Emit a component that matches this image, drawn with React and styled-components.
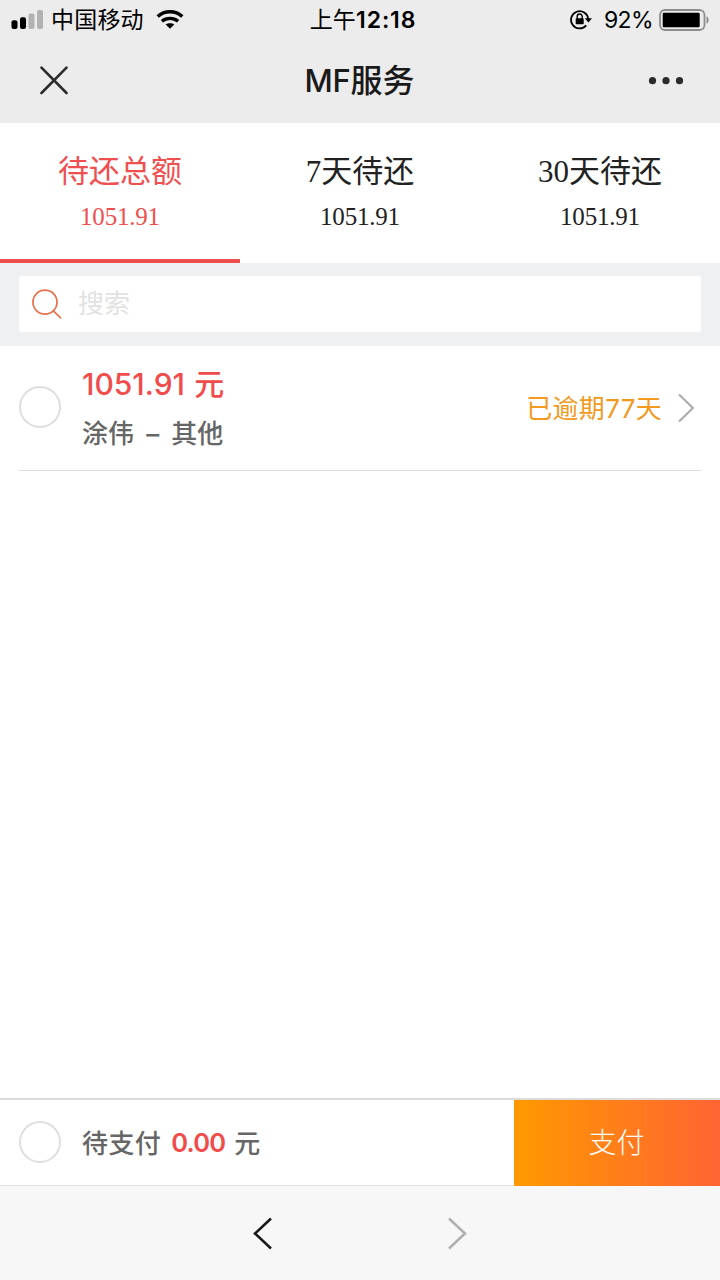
import React from "react";
import styled, { createGlobalStyle } from "styled-components";

const GlobalStyle = createGlobalStyle`
  * { box-sizing: border-box; }
  body {
    margin: 0;
    background: #fff;
    font-family: Inter, "Noto Sans CJK SC", sans-serif;
    color: #1a1a1a;
  }
`;

const Screen = styled.div`
  width: 720px;
  height: 1280px;
  display: flex;
  flex-direction: column;
  background: #fff;
  overflow: hidden;
`;

const Header = styled.header`
  height: 123px;
  background: #ececec;
  flex: none;
`;

const StatusBar = styled.div`
  height: 40px;
  display: grid;
  grid-template-columns: 1fr auto 1fr;
  align-items: center;
  padding: 0 10px 0 11px;
  color: #000;
  line-height: 40px;
`;

const StatusGroup = styled.div`
  display: flex;
  align-items: center;
  justify-content: ${(p) => (p.$end ? "flex-end" : "flex-start")};
  svg { display: block; flex: none; }
`;

const Carrier = styled.span`
  font-size: 23px;
  letter-spacing: 0.2px;
  margin: 0 12px 0 7px;
`;

const Clock = styled.span`
  font-size: 23px;
  font-weight: 600;
  letter-spacing: 0.9px;
  padding-left: 5px;
`;

const Meridiem = styled.span`
  font-weight: 400;
  letter-spacing: 0.2px;
`;

const BatteryLevel = styled.span`
  font-size: 23px;
  letter-spacing: -0.6px;
  margin: 0 6px 0 12px;
`;

const TitleBar = styled.div`
  height: 83px;
  display: grid;
  grid-template-columns: 1fr auto 1fr;
  align-items: center;
  padding: 0 36px 2px 39px;
  svg { display: block; }
`;

const Title = styled.h1`
  margin: 0;
  padding: 1px 4px 0 0;
  font-size: 32px;
  font-weight: 500;
  line-height: 40px;
`;

const TitleLatin = styled.span`
  font-size: 31px;
  letter-spacing: -0.2px;
`;

const MoreButton = styled.div`
  justify-self: end;
`;

const Tabs = styled.nav`
  display: grid;
  grid-template-columns: repeat(3, 1fr);
  height: 140px;
  flex: none;
  font-family: "Liberation Serif", "Noto Sans CJK SC", serif;
`;

const Tab = styled.div`
  display: flex;
  flex-direction: column;
  align-items: center;
  padding-top: 28px;
  color: ${(p) => (p.$active ? "#f04f50" : "#222")};
  border-bottom: 4px solid ${(p) => (p.$active ? "#ef4f4f" : "transparent")};
`;

const TabLabel = styled.span`
  font-size: 31px;
  line-height: 42px;
`;

const TabAmount = styled.span`
  font-size: 25px;
  line-height: 30px;
  letter-spacing: -0.2px;
  margin-top: 9px;
`;

const SearchArea = styled.div`
  height: 83px;
  flex: none;
  background: #eff0f2;
  padding: 13px 19px 14px;
`;

const SearchBox = styled.div`
  height: 56px;
  display: flex;
  align-items: center;
  gap: 15px;
  padding: 0 12px;
  border-radius: 3px;
  background: #fff;
  color: #e2e2e2;
  font-size: 26px;
  line-height: 54px;
  svg { display: block; }
`;

const List = styled.main`
  flex: 1;
  padding: 0 19px;
`;

const Row = styled.div`
  height: 125px;
  display: flex;
  align-items: center;
  padding: 0 6px 2px 0;
  border-bottom: 1px solid #dcdcdc;
  svg { margin-top: 2px; }
`;

const Radio = styled.span`
  width: 42px;
  height: 42px;
  flex: none;
  border: 2px solid #dedede;
  border-radius: 50%;
  margin-right: 21px;
`;

const RowText = styled.div`
  flex: 1;
  display: flex;
  flex-direction: column;
  padding-top: 2px;
`;

const Amount = styled.div`
  color: #f04c4c;
  font-size: 30px;
  font-weight: 500;
  line-height: 40px;
  word-spacing: 1.2px;
`;

const Payee = styled.div`
  color: #666;
  font-size: 26px;
  font-weight: 500;
  line-height: 36px;
  margin-top: 12px;
  word-spacing: 5.2px;
`;

const Overdue = styled.div`
  color: #f29a1f;
  font-size: 26px;
  line-height: 36px;
  letter-spacing: 0.3px;
  margin: 4px 15px 0 0;
`;

const PayBar = styled.footer`
  height: 88px;
  flex: none;
  display: flex;
  border-top: 2px solid #dcdcdc;
`;

const PaySummary = styled.div`
  flex: 1;
  display: flex;
  align-items: center;
  padding: 0 0 2px 19px;
  border-bottom: 1px solid #dedede;
  color: #666;
  font-size: 26px;
  font-weight: 500;
`;

const PayCaption = styled.span`
  letter-spacing: 0.4px;
`;

const PayTotal = styled.span`
  color: #f04c4c;
  font-size: 25.5px;
  font-weight: 600;
  letter-spacing: -0.8px;
  padding-top: 2px;
  margin: 0 9px 0 10px;
`;

const PayButton = styled.div`
  width: 206px;
  display: flex;
  align-items: center;
  justify-content: center;
  color: #fff;
  font-size: 28px;
  font-weight: 300;
  padding: 0 1px 4px 0;
  background: linear-gradient(to right, #ff9900, #ff6433);
`;

const BrowserBar = styled.div`
  height: 94px;
  flex: none;
  display: flex;
  align-items: center;
  justify-content: center;
  gap: 174px;
  background: #f7f7f7;
  svg { display: block; }
`;

const SignalIcon = () => (
  <svg width="33" height="20" viewBox="0 0 33 20">
    <rect x="0.5" y="10.2" width="6" height="8.8" rx="2" fill="#000" />
    <rect x="9" y="7.2" width="6" height="11.8" rx="2" fill="#000" />
    <rect x="17.5" y="3.4" width="6" height="15.6" rx="2" fill="#b2b2b2" />
    <rect x="26" y="0" width="6" height="19" rx="2" fill="#b2b2b2" />
  </svg>
);

const WifiIcon = () => (
  <svg width="28" height="20" viewBox="0 0 28 20" fill="none" stroke="#000">
    <path d="M1.7 6.6C8.4.2 19.6.2 26.3 6.6" strokeWidth="3.4" />
    <path d="M5.9 11.2C10.5 7.3 17.5 7.3 22.1 11.2" strokeWidth="3.3" />
    <path d="M14 18.8 9.7 14.6C12 12.7 16 12.7 18.3 14.6Z" fill="#000" stroke="none" />
  </svg>
);

const RotationLockIcon = () => (
  <svg width="22" height="20" viewBox="0 0 22 20" fill="none" stroke="#000">
    <path d="M16.2 15.4A8.6 8.6 0 1 1 18.2 9" strokeWidth="1.8" />
    <path d="M14.8 8.2H22L18.4 12.4Z" fill="#000" stroke="none" />
    <rect x="5.7" y="8.2" width="8" height="6" rx="0.8" fill="#000" stroke="none" />
    <path d="M7.2 9V6.5a2.5 2.5 0 0 1 5 0V9" strokeWidth="1.4" />
  </svg>
);

const BatteryIcon = () => (
  <svg width="51" height="22" viewBox="0 0 51 22">
    <rect x="1" y="1" width="44.5" height="20" rx="5" fill="none" stroke="#8e8e8e" strokeWidth="1.8" />
    <rect x="3.7" y="3.7" width="37" height="14.6" rx="1.2" fill="#000" />
    <path d="M47.5 7.2C50.3 8.2 50.3 13.8 47.5 14.8Z" fill="#8e8e8e" />
  </svg>
);

const CloseIcon = () => (
  <svg width="30" height="30" viewBox="0 0 30 30" stroke="#2b2b2b" strokeWidth="2.6" strokeLinecap="round">
    <path d="M2.5 1.7 27.5 27M27.5 1.7 2.5 27" />
  </svg>
);

const MoreIcon = () => (
  <svg width="36" height="8" viewBox="0 0 36 8" fill="#2b2b2b">
    <circle cx="4.5" cy="3.7" r="3.6" />
    <circle cx="18" cy="3.7" r="3.6" />
    <circle cx="31.5" cy="3.7" r="3.6" />
  </svg>
);

const SearchIcon = () => (
  <svg width="32" height="32" viewBox="0 0 32 32" fill="none" stroke="#e8704a" strokeWidth="1.7">
    <circle cx="14" cy="14.2" r="12" />
    <path d="M22.3 22.9 30.1 30.4" />
  </svg>
);

const Chevron = ({ width, height, color, stroke, back }) => (
  <svg width={width} height={height} fill="none" stroke={color} strokeWidth={stroke}>
    <path
      d={
        back
          ? `M${width - 2} 1.5 2 ${height / 2} ${width - 2} ${height - 1.5}`
          : `M2 1.5 ${width - 2} ${height / 2} 2 ${height - 1.5}`
      }
    />
  </svg>
);

const tabs = [
  { label: "待还总额", amount: "1051.91", active: true },
  { label: "7天待还", amount: "1051.91" },
  { label: "30天待还", amount: "1051.91" },
];

export default function App() {
  return (
    <Screen>
      <GlobalStyle />
      <Header>
        <StatusBar>
          <StatusGroup>
            <SignalIcon />
            <Carrier>中国移动</Carrier>
            <WifiIcon />
          </StatusGroup>
          <Clock><Meridiem>上午</Meridiem>12:18</Clock>
          <StatusGroup $end>
            <RotationLockIcon />
            <BatteryLevel>92%</BatteryLevel>
            <BatteryIcon />
          </StatusGroup>
        </StatusBar>
        <TitleBar>
          <CloseIcon />
          <Title><TitleLatin>MF</TitleLatin>服务</Title>
          <MoreButton><MoreIcon /></MoreButton>
        </TitleBar>
      </Header>
      <Tabs>
        {tabs.map((tab) => (
          <Tab key={tab.label} $active={tab.active}>
            <TabLabel>{tab.label}</TabLabel>
            <TabAmount>{tab.amount}</TabAmount>
          </Tab>
        ))}
      </Tabs>
      <SearchArea>
        <SearchBox>
          <SearchIcon />
          搜索
        </SearchBox>
      </SearchArea>
      <List>
        <Row>
          <Radio />
          <RowText>
            <Amount>1051.91 元</Amount>
            <Payee>涂伟 – 其他</Payee>
          </RowText>
          <Overdue>已逾期77天</Overdue>
          <Chevron width={18} height={30} color="#aaa" stroke={2} />
        </Row>
      </List>
      <PayBar>
        <PaySummary>
          <Radio />
          <PayCaption>待支付</PayCaption>
          <PayTotal>0.00</PayTotal>元
        </PaySummary>
        <PayButton>支付</PayButton>
      </PayBar>
      <BrowserBar>
        <Chevron width={20} height={33} color="#1a1a1a" stroke={2.6} back />
        <Chevron width={20} height={33} color="#b0b0b0" stroke={2.6} />
      </BrowserBar>
    </Screen>
  );
}
